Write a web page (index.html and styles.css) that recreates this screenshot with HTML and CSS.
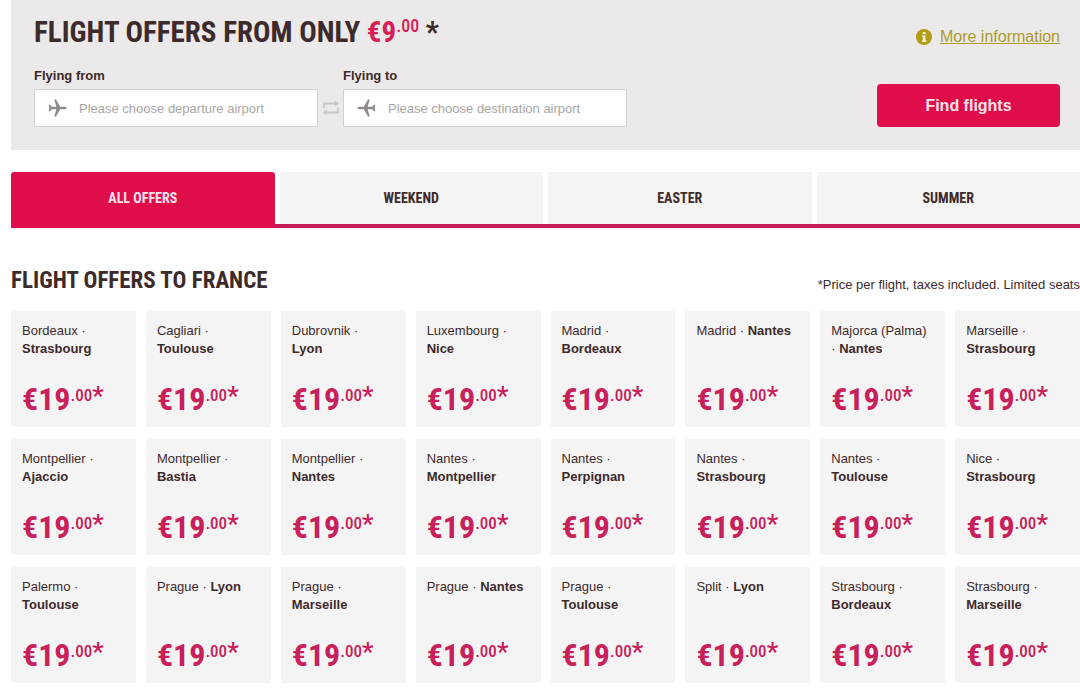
FILE: index.html
```html
<!DOCTYPE html>
<html lang="en">
<head>
  <meta charset="UTF-8" />
  <meta name="viewport" content="width=device-width, initial-scale=1.0"/>
  <title>Flight offers</title>
  <link rel="stylesheet" href="styles.css">
</head>
<body>

  <!-- Search -->
  <form class="search" onsubmit="return false">
    <div class="search-top">
      <h1>FLIGHT OFFERS FROM ONLY <span class="from-price">€9<sup>.00</sup></span> *</h1>
      <a class="more-info" href="#">
        <svg width="16" height="16" viewBox="0 0 16 16">
          <circle cx="8" cy="8" r="8" fill="#b39b16"/>
          <path d="M6.800 3h2.700v2.200H6.800zM6 6.400h3.400v5.200h.9v1.400H5.900v-1.400h.9V7.800H6z" fill="#f4f0d8"/>
        </svg>
        <span>More information</span>
      </a>
    </div>
    <div class="search-row">
      <div class="field">
        <label for="from">Flying from</label>
        <div class="input-box">
          <svg width="19" height="18" viewBox="0 0 19 18">
            <path d="M18.500 9c0 .8-.8 1.200-1.800 1.200h-4.500L8 17.500H6.300l2-7.300H3.900L2.200 12.300H.6L1.400 9 .6 5.700h1.600l1.700 2.100h4.400l-2-7.300H8l4.200 7.300h4.500c1 0 1.800.4 1.800 1.200z" fill="#8f8a89"/>
          </svg>
          <input type="text" id="from" placeholder="Please choose departure airport">
        </div>
      </div>
      <button type="button" class="swap" aria-label="Swap airports">
        <svg width="18" height="16" viewBox="0 0 18 16" fill="none" stroke="#c9c6c5" stroke-width="1.800">
          <path d="M2 8V3.500h13M16 8v4.500H3"/>
          <path d="M13 .5l4 3-4 3zM5 9.500l-4 3 4 3z" fill="#c9c6c5" stroke="none"/>
        </svg>
      </button>
      <div class="field">
        <label for="to">Flying to</label>
        <div class="input-box">
          <svg width="19" height="18" viewBox="0 0 19 18">
            <path d="M.5 9c0 .8.8 1.200 1.800 1.200h4.500l4.200 7.300h1.700l-2-7.300h4.400l1.700 2.100h1.600L17.600 9l.8-3.300h-1.600l-1.700 2.100h-4.400l2-7.300H11L6.800 7.800H2.300C1.300 7.800.5 8.200.5 9z" fill="#8f8a89"/>
          </svg>
          <input type="text" id="to" placeholder="Please choose destination airport">
        </div>
      </div>
      <button type="submit" class="submit">Find flights</button>
    </div>
  </form>

  <!-- Tabs -->
  <div class="tabs">
    <button class="active" onclick="showTab(this)">ALL OFFERS</button>
    <button onclick="showTab(this)">WEEKEND</button>
    <button onclick="showTab(this)">EASTER</button>
    <button onclick="showTab(this)">SUMMER</button>
  </div>

  <!-- Offers -->
  <div class="offers-head">
    <h2>FLIGHT OFFERS TO FRANCE</h2>
    <p>*Price per flight, taxes included. Limited seats</p>
  </div>
  <div class="offers" id="offers"></div>

  <script>
    const offers = [
      ['Bordeaux', 'Strasbourg'],
      ['Cagliari', 'Toulouse'],
      ['Dubrovnik', 'Lyon'],
      ['Luxembourg', 'Nice'],
      ['Madrid', 'Bordeaux'],
      ['Madrid', 'Nantes'],
      ['Majorca (Palma)', 'Nantes'],
      ['Marseille', 'Strasbourg'],
      ['Montpellier', 'Ajaccio'],
      ['Montpellier', 'Bastia'],
      ['Montpellier', 'Nantes'],
      ['Nantes', 'Montpellier'],
      ['Nantes', 'Perpignan'],
      ['Nantes', 'Strasbourg'],
      ['Nantes', 'Toulouse'],
      ['Nice', 'Strasbourg'],
      ['Palermo', 'Toulouse'],
      ['Prague', 'Lyon'],
      ['Prague', 'Marseille'],
      ['Prague', 'Nantes'],
      ['Prague', 'Toulouse'],
      ['Split', 'Lyon'],
      ['Strasbourg', 'Bordeaux'],
      ['Strasbourg', 'Marseille']
    ];

    document.getElementById('offers').innerHTML = offers.map(([from, to]) => `
      <a class="offer" href="#">
        <span class="route"><span>${from}</span> <span>·</span> <b>${to}</b></span>
        <span class="price">€19<sup>.00</sup><span class="star">*</span></span>
      </a>`).join('');

    function showTab(tab) {
      document.querySelectorAll('.tabs button').forEach(b => b.classList.remove('active'));
      tab.classList.add('active');
    }
  </script>

</body>
</html>
```
FILE: styles.css
```css
* {
  box-sizing: border-box;
}

body {
  margin: 0;
  padding-left: 11px;
  background-color: #fff;
  color: #3d2a2b;
  font-family: "Liberation Sans", Arial, sans-serif;
  font-size: 13px;
}

h1, h2, p {
  margin: 0;
}

h1, h2, .tabs button, .price {
  font-family: "Roboto Condensed", "Roboto", sans-serif;
  font-weight: bold;
}

sup {
  font-size: 17px;
  font-weight: 500;
  line-height: 32px;
  vertical-align: top;
}

.search {
  background-color: #ebe9e9;
  padding: 12px 20px 23px 23px;
}

.search-top {
  display: flex;
  justify-content: space-between;
  align-items: center;
}

h1 {
  font-size: 29px;
  line-height: 40px;
}

h1 sup {
  font-size: 18px;
  line-height: 28px;
}

.from-price {
  color: #d81e55;
}

.more-info {
  display: flex;
  align-items: center;
  gap: 8px;
  padding-top: 10px;
  color: #ab9a2c;
  font-size: 16px;
}

.search-row {
  display: flex;
  align-items: flex-end;
}

.field {
  width: 284px;
}

.field label {
  display: block;
  line-height: 16px;
  margin: 16px 0 5px;
  font-weight: bold;
}

.input-box {
  display: flex;
  align-items: center;
  gap: 12px;
  height: 38px;
  padding: 0 13px;
  background-color: #fff;
  border: 1px solid #d3d0d0;
}

.input-box input {
  flex: 1;
  min-width: 0;
  padding: 0;
  border: none;
  outline: none;
  font-family: inherit;
  font-size: 13px;
}

.input-box input::placeholder {
  color: #aaa6a5;
}

.swap {
  width: 25px;
  height: 38px;
  padding: 0;
  border: none;
  background: none;
  cursor: pointer;
}

.swap svg {
  display: block;
  margin: auto;
}

.submit {
  width: 183px;
  height: 43px;
  margin-left: auto;
  border: none;
  border-radius: 4px;
  background-color: #e00d4b;
  color: #fbe3ea;
  font-family: inherit;
  font-size: 16px;
  font-weight: bold;
  cursor: pointer;
}

.tabs {
  display: flex;
  gap: 5px;
  margin-top: 22px;
  border-bottom: 4px solid #c41c54;
}

.tabs button {
  flex: 1;
  height: 52px;
  border: none;
  background-color: #f5f4f4;
  color: #3d2a2b;
  font-size: 14px;
  cursor: pointer;
}

.tabs button.active {
  border-radius: 3px 3px 0 0;
  background-color: #e00d4b;
  color: #fbe3ea;
  box-shadow: 0 4px #e00d4b;
}

.offers-head {
  display: flex;
  justify-content: space-between;
  align-items: flex-end;
  margin: 37px 0 14px;
}

.offers-head p {
  line-height: 24px;
}

h2 {
  font-size: 23px;
  line-height: 32px;
}

.offers {
  display: grid;
  grid-template-columns: repeat(8, 1fr);
  gap: 12px 10px;
  padding-bottom: 5px;
}

.offer {
  display: flex;
  flex-direction: column;
  justify-content: space-between;
  height: 116px;
  padding: 11px 15px 8px 11px;
  background-color: #f5f4f5;
  color: #3d2a2b;
  text-decoration: none;
}

.route {
  line-height: 18px;
}

.price {
  color: #c8205a;
  font-size: 32px;
  line-height: 40px;
}

.star {
  font-size: 26px;
  font-weight: 500;
  line-height: 34px;
  vertical-align: top;
}
```
